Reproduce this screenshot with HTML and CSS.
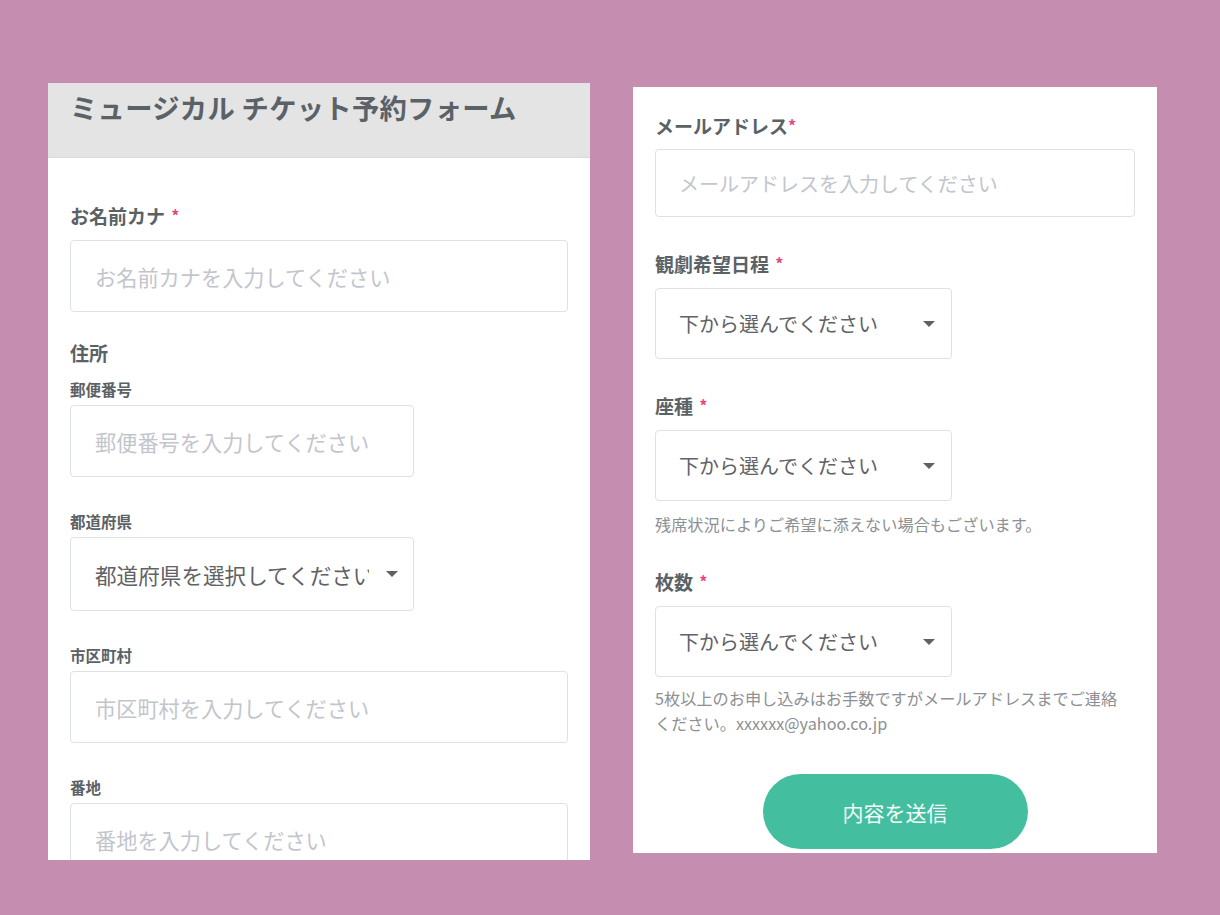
FILE: index.html
```html
<!DOCTYPE html>
<html lang="ja">
<head>
<meta charset="utf-8">
<title>ミュージカル チケット予約フォーム</title>
<link rel="stylesheet" href="styles.css">
</head>
<body>
<main class="stage">
  <section class="panel panel-left">
    <header class="form-header">
      <h1 class="form-title">ミュージカル チケット予約フォーム</h1>
    </header>
    <div class="panel-body">
      <div class="field field-first">
        <label class="label">お名前カナ <span class="req">*</span></label>
        <input class="control control-wide" type="text" placeholder="お名前カナを入力してください">
      </div>
      <div class="group">
        <div class="label group-label">住所</div>
        <div class="sub-field sub-first">
          <label class="sub-label">郵便番号</label>
          <input class="control control-short" type="text" placeholder="郵便番号を入力してください">
        </div>
        <div class="sub-field">
          <label class="sub-label">都道府県</label>
          <div class="select select-short select-left">
            <span class="select-text">都道府県を選択してください</span>
            <span class="caret"></span>
          </div>
        </div>
        <div class="sub-field">
          <label class="sub-label">市区町村</label>
          <input class="control control-wide" type="text" placeholder="市区町村を入力してください">
        </div>
        <div class="sub-field">
          <label class="sub-label">番地</label>
          <input class="control control-wide" type="text" placeholder="番地を入力してください">
        </div>
      </div>
    </div>
  </section>

  <section class="panel panel-right">
    <div class="field-r field-r-first">
      <label class="label">メールアドレス<span class="req req-tight">*</span></label>
      <input class="control control-r control-email" type="text" placeholder="メールアドレスを入力してください">
    </div>
    <div class="field-r">
      <label class="label">観劇希望日程 <span class="req">*</span></label>
      <div class="select select-r">
        <span class="select-text">下から選んでください</span>
        <span class="caret"></span>
      </div>
    </div>
    <div class="field-r">
      <label class="label">座種 <span class="req">*</span></label>
      <div class="select select-r">
        <span class="select-text">下から選んでください</span>
        <span class="caret"></span>
      </div>
      <p class="note">残席状況によりご希望に添えない場合もございます。</p>
    </div>
    <div class="field-r field-r-count">
      <label class="label">枚数 <span class="req">*</span></label>
      <div class="select select-r">
        <span class="select-text">下から選んでください</span>
        <span class="caret"></span>
      </div>
      <p class="note note-multi">5枚以上のお申し込みはお手数ですがメールアドレスまでご連絡<br>ください。xxxxxx@yahoo.co.jp</p>
    </div>
    <div class="actions">
      <button class="submit" type="button">内容を送信</button>
    </div>
  </section>
</main>
</body>
</html>
```
FILE: styles.css
```css
* {
  box-sizing: border-box;
}

html, body {
  margin: 0;
  padding: 0;
}

body {
  background: #c58db0;
  font-family: "Noto Sans CJK JP", "Noto Sans", sans-serif;
  color: #5b6266;
  width: 1220px;
  height: 915px;
  overflow: hidden;
}

.stage {
  display: flex;
  align-items: flex-start;
  padding: 83px 0 0 48px;
  gap: 43px;
}

.panel {
  background: #ffffff;
  overflow: hidden;
}

.panel-left {
  width: 542px;
  height: 777px;
}

.panel-right {
  width: 524px;
  height: 766px;
  margin-top: 4px;
  padding: 27px 22px 0 22px;
}

/* header */
.form-header {
  background: #e4e4e4;
  height: 75px;
  padding: 6px 22px 0 22px;
  border-bottom: 1px solid #dcdcdc;
}

.form-title {
  margin: 0;
  font-size: 27.3px;
  line-height: 36px;
  font-weight: 700;
  color: #5a6267;
  letter-spacing: 0.3px;
  white-space: nowrap;
}

.panel-body {
  padding: 0 22px;
}

/* labels */
.label {
  display: block;
  font-size: 19px;
  line-height: 24px;
  height: 24px;
  font-weight: 700;
  color: #5b6266;
}

.req {
  color: #e4487c;
  font-size: 16px;
  line-height: 0;
  vertical-align: 2px;
  margin-left: 2px;
}

.req-tight {
  margin-left: 0;
}

.sub-label {
  display: block;
  font-size: 15.5px;
  line-height: 20px;
  font-weight: 700;
  color: #5b6266;
}

/* left fields */
.field-first {
  margin-top: 46px;
}

.field-first .label {
  margin-bottom: 12px;
}

.group {
  margin-top: 29px;
}

.group-label {
  margin-bottom: 14px;
}

.sub-field {
  margin-top: 34px;
}

.sub-field.sub-first {
  margin-top: 0;
}

.sub-label {
  margin-bottom: 6px;
}

/* controls */
.control {
  display: block;
  height: 72px;
  border: 1.5px solid #dfe1e8;
  border-radius: 4px;
  background: #fff;
  padding: 0 24px;
  font-family: "Noto Sans CJK JP", "Noto Sans", sans-serif;
  font-size: 21.2px;
  color: #606266;
  outline: none;
}

.control::placeholder {
  color: #c2c5cc;
}

.control-wide {
  width: 498px;
}

.control-short {
  width: 344px;
}

.select {
  display: flex;
  align-items: center;
  border: 1.5px solid #dfe1e8;
  border-radius: 4px;
  background: #fff;
  color: #606266;
}

.select-text {
  flex: 1;
  overflow: hidden;
  white-space: nowrap;
}

.caret {
  flex: none;
  width: 0;
  height: 0;
  border-left: 6px solid transparent;
  border-right: 6px solid transparent;
  border-top: 6px solid #5e6268;
}

.select-left {
  height: 74px;
  width: 344px;
  padding: 0 15px 0 24px;
  font-size: 21.6px;
}

.select-left .select-text {
  margin-right: 17px;
}

/* right panel */
.field-r {
  margin-top: 35px;
}

.field-r-first {
  margin-top: 0;
}

.field-r .label {
  margin-bottom: 12px;
}

.field-r-first .label {
  margin-bottom: 11px;
}

.control-r {
  font-size: 20px;
}

.control-email {
  width: 480px;
  height: 68px;
  padding: 0 23px;
}

.select-r {
  width: 297px;
  height: 71px;
  padding: 0 16px 0 23px;
  font-size: 20px;
}

.note {
  margin: 11px 0 0 0;
  font-size: 16.2px;
  line-height: 25px;
  color: #8d9094;
  white-space: nowrap;
}

.field-r-count {
  margin-top: 33px;
}

.note-multi {
  margin-top: 9px;
}

.actions {
  display: flex;
  justify-content: center;
  margin-top: 38px;
}

.submit {
  width: 265px;
  height: 75px;
  border: none;
  border-radius: 38px;
  background: #43bfa0;
  color: #f4fbf9;
  font-family: "Noto Sans CJK JP", "Noto Sans", sans-serif;
  font-size: 21px;
  cursor: pointer;
}
```
